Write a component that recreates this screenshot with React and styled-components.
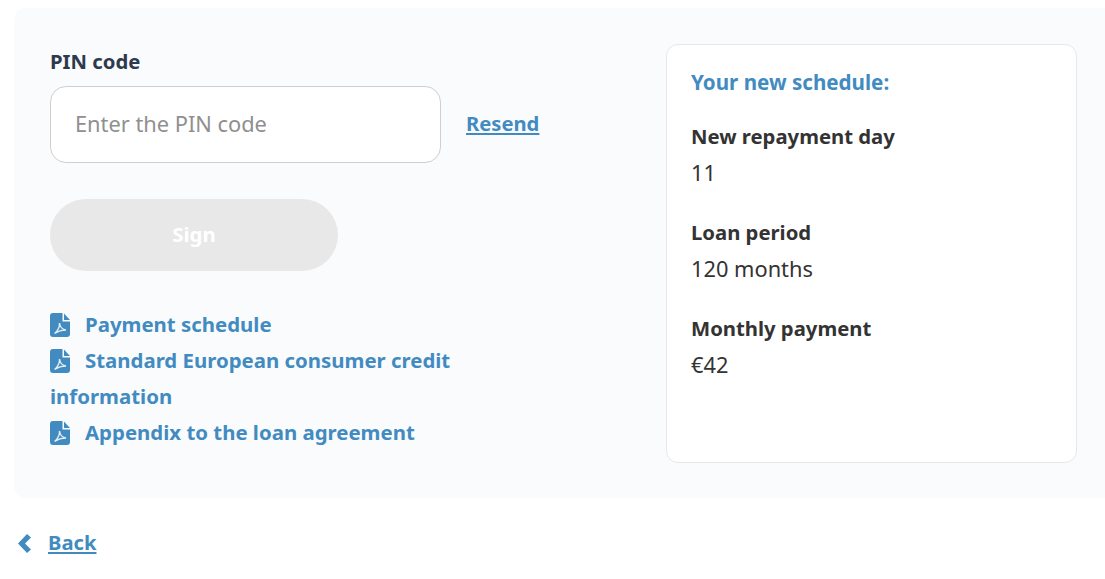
import React from 'react';
import styled, { createGlobalStyle } from 'styled-components';

const GlobalStyle = createGlobalStyle`
  html, body {
    margin: 0;
    padding: 0;
    background: #fff;
    overflow: hidden;
  }
  body {
    font-family: "Noto Sans", "Open Sans", sans-serif;
    color: #333;
  }
`;

const Page = styled.div`
  width: 1105px;
  height: 579px;
  padding: 8px 0 0 14px;
  box-sizing: border-box;
`;

const Panel = styled.div`
  display: flex;
  justify-content: space-between;
  align-items: flex-start;
  width: 1091px;
  height: 490px;
  box-sizing: border-box;
  padding: 36px 28px 0 36px;
  background: #fafbfd;
  border-radius: 12px 0 0 12px;
`;

const FormColumn = styled.div`
  width: 410px;
  margin-top: -1px;
`;

const FieldLabel = styled.div`
  font-size: 20.3px;
  font-weight: 700;
  line-height: 36px;
  color: #2e3a4c;
`;

const PinRow = styled.div`
  display: flex;
  align-items: center;
  gap: 25px;
  width: 560px;
  margin-top: 7px;
`;

const PinInput = styled.input`
  width: 391px;
  height: 77px;
  box-sizing: border-box;
  padding: 0 24px 2px;
  border: 1px solid #cfcfcf;
  border-radius: 16px;
  background: #fff;
  font: 400 21.8px "Noto Sans", sans-serif;
  outline: none;
  &::placeholder {
    color: #8f8f8f;
    opacity: 1;
  }
`;

const TextLink = styled.a`
  font-size: 20.2px;
  font-weight: 700;
  color: #428bc1;
  text-decoration: underline;
  padding-bottom: ${p => p.$lift || 0}px;
`;

const SignButton = styled.button`
  display: block;
  width: 288px;
  height: 72px;
  margin-top: 36px;
  padding: 0 0 2px;
  border: 0;
  border-radius: 36px;
  background: #e8e8e8;
  color: #fff;
  font: 700 20.4px "Noto Sans", sans-serif;
`;

const DocList = styled.div`
  margin-top: 35px;
  width: 410px;
`;

const DocLink = styled.div`
  font-size: 20.4px;
  font-weight: 700;
  line-height: 36px;
  color: #428bc1;
`;

const PdfSvg = styled.svg`
  width: 20px;
  height: 24px;
  margin-right: 15px;
  vertical-align: -5px;
`;

const PdfIcon = () => (
  <PdfSvg viewBox="0 0 20 24">
    <path
      d="M3 0H12.500V8.500H20V21a3 3 0 0 1-3 3H3a3 3 0 0 1-3-3V3a3 3 0 0 1 3-3Z"
      fill="#428bc1"
    />
    <path d="M14 .5L20 7H14Z" fill="#428bc1" />
    <path
      d="M4.500 20.500C7.500 18.500 10 13.500 9.500 10C10 13.500 12.500 16.500 16 17C12.500 17 7.500 18.500 4.500 20.500Z"
      fill="none"
      stroke="#e3edf5"
      strokeWidth="1.400"
    />
  </PdfSvg>
);

const ScheduleCard = styled.div`
  width: 411px;
  height: 419px;
  box-sizing: border-box;
  padding: 19px 24px;
  background: #fff;
  border: 1px solid #e6e8ec;
  border-radius: 12px;
`;

const CardTitle = styled.div`
  font-size: 20.6px;
  font-weight: 700;
  line-height: 36px;
  color: #428bc1;
  margin-bottom: 18px;
`;

const Term = styled.div`
  font-size: 20.3px;
  font-weight: 700;
  line-height: 36px;
  color: #333;
  margin-bottom: 1px;
`;

const Value = styled.div`
  font-size: 21.8px;
  line-height: 36px;
  color: #333;
  margin-bottom: 23px;
`;

const BackRow = styled.div`
  display: flex;
  align-items: center;
  gap: 17px;
  padding: 26px 0 0 4px;
  line-height: 36px;
`;

const BackChevron = styled.svg`
  width: 13px;
  height: 19px;
`;

const terms = [
  ['New repayment day', '11'],
  ['Loan period', '120 months'],
  ['Monthly payment', '€42'],
];

const docs = ['Payment schedule', 'Standard European consumer credit information', 'Appendix to the loan agreement'];

export default function App() {
  return (
    <Page>
      <GlobalStyle />
      <Panel>
        <FormColumn>
          <FieldLabel>PIN code</FieldLabel>
          <PinRow>
            <PinInput placeholder="Enter the PIN code" />
            <TextLink $lift={4}>Resend</TextLink>
          </PinRow>
          <SignButton>Sign</SignButton>
          <DocList>
            {docs.map(d => (
              <DocLink key={d}><PdfIcon />{d}</DocLink>
            ))}
          </DocList>
        </FormColumn>
        <ScheduleCard>
          <CardTitle>Your new schedule:</CardTitle>
          {terms.map(([t, v]) => (
            <div key={t}>
              <Term>{t}</Term>
              <Value>{v}</Value>
            </div>
          ))}
        </ScheduleCard>
      </Panel>
      <BackRow>
        <BackChevron viewBox="0 0 13 19">
          <path d="M9 0L13 3.500L7 9.500L13 15.500L9 19L0 9.500Z" fill="#428bc1" />
        </BackChevron>
        <TextLink $lift={2}>Back</TextLink>
      </BackRow>
    </Page>
  );
}
